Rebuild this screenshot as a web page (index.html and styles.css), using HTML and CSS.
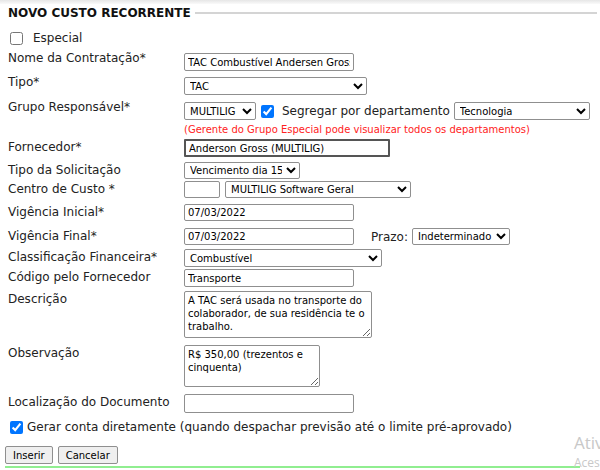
FILE: index.html
```html
<!DOCTYPE html>
<html lang="pt-BR">
<head>
  <meta charset="UTF-8">
  <title>Novo Custo Recorrente</title>
  <link rel="stylesheet" href="styles.css">
</head>
<body>
  <div class="topbar"></div>
  <div class="legend">
    <span>NOVO CUSTO RECORRENTE</span>
    <div class="legend-line"></div>
  </div>

  <label class="check-row especial"><input type="checkbox"> Especial</label>

  <div class="form">
    <div class="lbl top">Nome da Contratação*</div>
    <div class="fld"><input class="txt w170" type="text" value="TAC Combustível Andersen Gross"></div>

    <div class="lbl top">Tipo*</div>
    <div class="fld"><select class="sel w183"><option>TAC</option></select></div>

    <div class="lbl top">Grupo Responsável*</div>
    <div class="fld grupo">
      <div class="inline">
        <select class="sel w72"><option>MULTILIG</option></select>
        <label class="segregar"><input type="checkbox" checked> Segregar por departamento</label>
        <select class="sel w136"><option>Tecnologia</option></select>
      </div>
      <div class="note">(Gerente do Grupo Especial pode visualizar todos os departamentos)</div>
    </div>

    <div class="lbl">Fornecedor*</div>
    <div class="fld"><input class="txt w206 focused" type="text" value="Anderson Gross (MULTILIG)"></div>

    <div class="lbl">Tipo da Solicitação</div>
    <div class="fld"><select class="sel w116 short"><option>Vencimento dia 15</option></select></div>

    <div class="lbl">Centro de Custo *</div>
    <div class="fld inline">
      <input class="txt w36 short" type="text" value="">
      <select class="sel w186 short"><option>MULTILIG Software Geral</option></select>
    </div>

    <div class="lbl">Vigência Inicial*</div>
    <div class="fld"><input class="txt w170 short" type="text" value="07/03/2022"></div>

    <div class="lbl">Vigência Final*</div>
    <div class="fld inline">
      <input class="txt w170 short" type="text" value="07/03/2022">
      <span class="prazo">Prazo:</span>
      <select class="sel w98 short"><option>Indeterminado</option></select>
    </div>

    <div class="lbl">Classificação Financeira*</div>
    <div class="fld"><select class="sel w198"><option>Combustível</option></select></div>

    <div class="lbl">Código pelo Fornecedor</div>
    <div class="fld"><input class="txt w170" type="text" value="Transporte"></div>

    <div class="lbl">Descrição</div>
    <div class="fld"><textarea class="area desc">A TAC será usada no transporte do colaborador, de sua residência te o trabalho.</textarea></div>

    <div class="lbl">Observação</div>
    <div class="fld"><textarea class="area obs">R$ 350,00 (trezentos e cinquenta)</textarea></div>

    <div class="lbl">Localização do Documento</div>
    <div class="fld"><input class="txt w170 tall" type="text" value=""></div>
  </div>

  <label class="check-row gerar"><input type="checkbox" checked> Gerar conta diretamente (quando despachar previsão até o limite pré-aprovado)</label>

  <div class="buttons">
    <button>Inserir</button>
    <button>Cancelar</button>
  </div>
  <div class="bottom-line"></div>

  <div class="watermark">Ativ<br><small>Aces</small></div>
</body>
</html>
```

FILE: styles.css
```css
body {
  margin: 0;
  font-family: "DejaVu Sans", Verdana, sans-serif;
  font-size: 12px;
  color: #222;
  background: #fff;
  overflow: hidden;
}
.topbar {
  height: 4px;
  background: linear-gradient(#e6e6e6, #fafafa);
}
.legend {
  display: flex;
  align-items: center;
  padding: 2px 3px 0 8px;
  height: 14px;
}
.legend span {
  font-weight: bold;
  font-size: 12px;
  color: #111;
}
.legend-line {
  flex: 1;
  height: 2px;
  background: #d4d4d4;
  margin-left: 4px;
}
.check-row {
  display: flex;
  align-items: center;
  padding-left: 8px;
}
.check-row input {
  margin: 0 6px 0 2px;
  width: 13px;
  height: 13px;
}
.especial {
  margin-top: 10px;
  height: 16px;
}
.especial input {
  margin-right: 10px;
}
.form {
  display: grid;
  grid-template-columns: 176px 1fr;
  grid-template-rows: 24px 25px 37px 23px 19px 23px 24px 21px 20px 22px 54px 49px 20px;
  padding-left: 8px;
  margin-top: 7px;
}
.lbl {
  padding-top: 1px;
  line-height: 15px;
}
.lbl.top {
  padding-top: 0;
  margin-top: -2px;
}
.fld {
  display: flex;
  flex-direction: column;
  align-items: flex-start;
  align-self: start;
}
.inline {
  display: flex;
  flex-direction: row;
  align-items: center;
}
.txt, .sel, .area {
  font-family: "DejaVu Sans", Verdana, sans-serif;
  font-size: 10px;
  color: #000;
  box-sizing: border-box;
  border: 1px solid #8f8f8f;
  border-radius: 2px;
  background: #fff;
  margin: 0;
}
.txt {
  height: 18px;
  padding: 0 3px;
}
.sel {
  height: 18px;
  padding: 0 1px;
}
.short {
  height: 17px;
}
.tall {
  height: 19px;
}
.focused {
  border: 2px solid #555;
  border-radius: 1px;
}
.w36 { width: 36px; }
.w72 { width: 72px; }
.w98 { width: 98px; }
.w116 { width: 116px; }
.w136 { width: 136px; }
.w170 { width: 170px; }
.w183 { width: 183px; }
.w186 { width: 186px; margin-left: 5px; }
.w198 { width: 198px; }
.w206 { width: 206px; }
.segregar {
  display: flex;
  align-items: center;
  margin: 0 4px 0 5px;
  font-size: 12px;
}
.segregar input {
  margin: 0 8px 0 0;
  width: 13px;
  height: 13px;
}
.note {
  color: #f22;
  font-size: 10px;
  margin-top: 3px;
  line-height: 13px;
}
.prazo {
  margin: 0 4px 0 17px;
}
.area {
  padding: 2px 3px;
  resize: both;
  line-height: 13px;
}
.desc {
  width: 188px;
  height: 47px;
}
.obs {
  width: 136px;
  height: 42px;
}
.gerar {
  margin-top: 5px;
  height: 16px;
}
.gerar input {
  margin-right: 4px;
}
.buttons {
  display: flex;
  gap: 5px;
  padding-left: 5px;
  margin-top: 11px;
}
.buttons button {
  font-family: "DejaVu Sans", Verdana, sans-serif;
  font-size: 10px;
  height: 18px;
  padding: 0 7px;
  border: 1px solid #8f8f8f;
  border-radius: 2px;
  background: #efefef;
  color: #000;
}
.bottom-line {
  height: 2px;
  background: #90ee90;
  margin: 2px 20px 0 5px;
}
.watermark {
  position: absolute;
  left: 574px;
  top: 434px;
  color: #c8c8c8;
  font-family: "Open Sans", sans-serif;
  font-size: 17px;
  line-height: 18px;
}
.watermark small {
  font-size: 12px;
}
```
